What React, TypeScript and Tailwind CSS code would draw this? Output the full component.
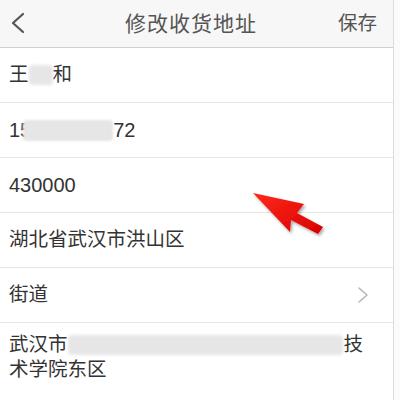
import React from "react";

const FONT = {
	fontFamily:
		"'Liberation Sans', 'Noto Sans CJK SC', 'Noto Sans', sans-serif",
};

function Blur({ w }: { w: string }) {
	return <span className={`inline-block h-[20px] ${w} rounded-sm bg-[#e6e6e6] blur-[1.5px]`} />;
}

function Row({ children, className = "" }: { children: React.ReactNode; className?: string }) {
	return (
		<div
			className={`flex h-[55px] items-center border-b border-[#e6e6e6] pl-[9px] pr-[22px] text-[19.5px] text-[#333] ${className}`}
		>
			{children}
		</div>
	);
}

export default function App() {
	return (
		<div className="relative flex h-[400px] w-[400px] overflow-hidden bg-[#fbfbfb]" style={FONT}>
			<div className="flex w-[394px] flex-col border-r border-[#dcdcdc] bg-white">
				<header className="flex h-[48px] items-center justify-between border-b border-[#cfcfcf] bg-[#f7f7f7] pl-[10px] pr-[16px] text-[#555]">
					<svg width="16" height="22" viewBox="0 0 16 22" className="mt-[-2px]">
						<path d="M13 2 L3 11 L13 20" fill="none" stroke="#555" strokeWidth="2.2" strokeLinecap="round" strokeLinejoin="round" />
					</svg>
					<h1 className="ml-[18px] text-[21px] tracking-[1px]">修改收货地址</h1>
					<span className="text-[19.5px]">保存</span>
				</header>

				<Row>
					<span>王</span>
					<Blur w="w-[24px]" />
					<span>和</span>
				</Row>
				<Row>
					<span className="text-[20px]">15</span>
					<span className="relative ml-[-8px] inline-block h-[21px] w-[90px] rounded-sm bg-[#e6e6e6] blur-[0.8px]" />
					<span className="text-[20px]">72</span>
				</Row>
				<Row>
					<span className="text-[20px]">430000</span>
				</Row>
				<Row>
					<span>湖北省武汉市洪山区</span>
				</Row>
				<Row className="justify-between">
					<span>街道</span>
					<svg width="12" height="18" viewBox="0 0 12 18" className="mr-[2px]">
						<path d="M2 2 L10 9 L2 16" fill="none" stroke="#b5b5b5" strokeWidth="1.5" strokeLinecap="round" strokeLinejoin="round" />
					</svg>
				</Row>
				<div className="pl-[9px] pr-[30px] pt-[9px] text-[19.5px] leading-[25px] text-[#333]">
					<div className="flex items-center">
						<span>武汉市</span>
						<Blur w="w-[276px]" />
						<span>技</span>
					</div>
					<div>术学院东区</div>
				</div>
			</div>

			<svg className="pointer-events-none absolute left-0 top-0" width="400" height="400">
				<defs>
					<linearGradient id="ar" x1="0" y1="0" x2="1" y2="1">
						<stop offset="0" stopColor="#ff2a1a" />
						<stop offset="1" stopColor="#d80000" />
					</linearGradient>
					<filter id="sh" x="-20%" y="-20%" width="140%" height="140%">
						<feDropShadow dx="1.5" dy="2" stdDeviation="1.5" floodColor="#000" floodOpacity="0.35" />
					</filter>
				</defs>
				<polygon
					points="253,193 304,204 297,213 323,227 318,234 291,220 290,232"
					fill="url(#ar)"
					filter="url(#sh)"
				/>
			</svg>
		</div>
	);
}
